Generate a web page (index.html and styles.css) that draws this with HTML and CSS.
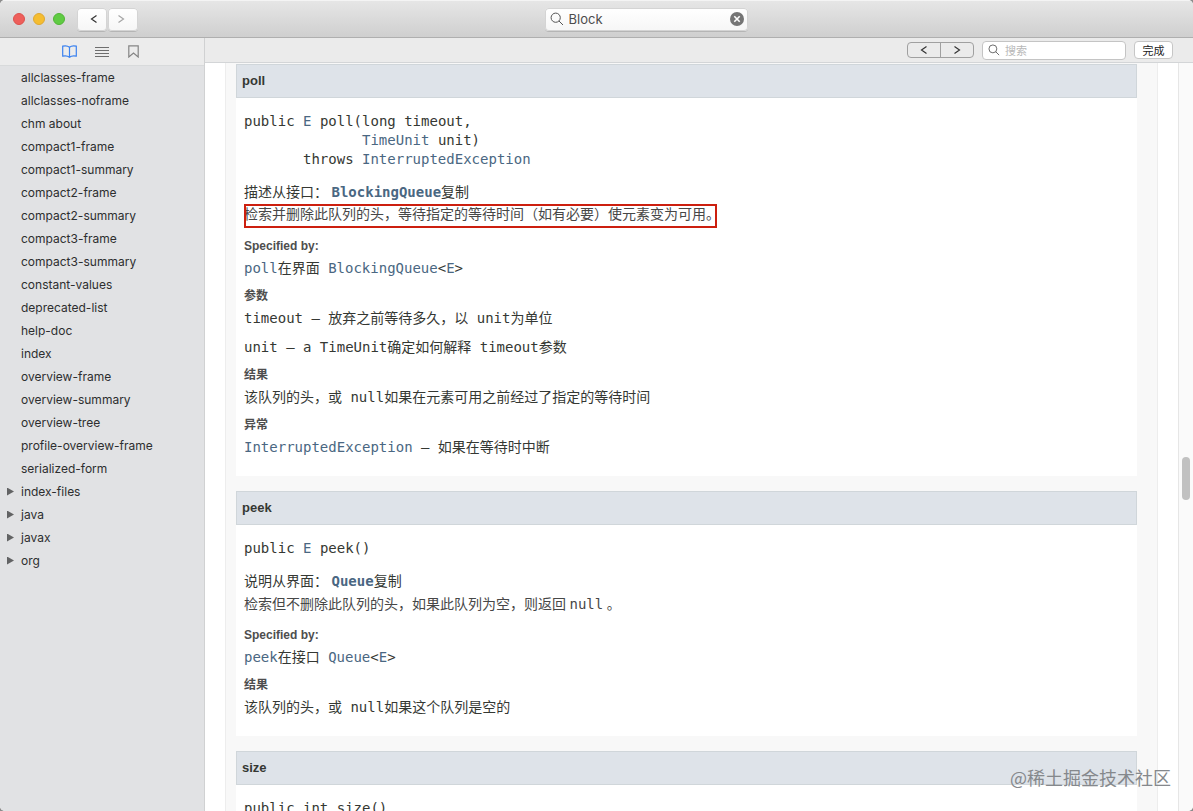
FILE: index.html
```html
<!DOCTYPE html>
<html lang="zh-CN">
<head>
<meta charset="utf-8">
<title>Block</title>
<link rel="stylesheet" href="styles.css">
</head>
<body>
<div class="window">
  <header class="titlebar">
    <div class="title-left">
      <div class="lights">
        <button class="light red" aria-label="关闭"></button>
        <button class="light yellow" aria-label="最小化"></button>
        <button class="light green" aria-label="缩放"></button>
      </div>
      <div class="history">
        <button class="back" aria-label="后退"><svg width="8" height="10" viewBox="0 0 8 10"><path d="M6.500 1.500 1.500 5l5 3.500"/></svg></button>
        <button class="forward" aria-label="前进"><svg width="8" height="10" viewBox="0 0 8 10"><path d="M1.500 1.500 6.500 5l-5 3.500"/></svg></button>
      </div>
    </div>
    <div class="search search-main">
      <svg width="14" height="14" viewBox="0 0 14 14"><circle cx="5.700" cy="5.700" r="4.600"/><path d="m9 9 4 4"/></svg>
      <input type="text" value="Block" aria-label="搜索文档">
      <button class="clear" aria-label="清除"><svg width="14" height="14" viewBox="0 0 14 14"><circle cx="7" cy="7" r="7"/><path d="m4.300 4.300 5.400 5.400m0-5.400L4.300 9.700"/></svg></button>
    </div>
  </header>

  <div class="body">
    <aside class="sidebar">
      <div class="tabs">
        <button class="tab active" aria-label="目录"><svg width="15" height="13" viewBox="0 0 15 13"><path d="M7.500 2.300C5.800.8 3.200.6.700 1.200v9.900c2.500-.6 5.100-.3 6.800 1.200 1.700-1.500 4.300-1.800 6.800-1.200V1.200C11.800.6 9.200.8 7.500 2.300zm0 0v10"/></svg></button>
        <button class="tab" aria-label="列表"><svg width="15" height="12" viewBox="0 0 15 12"><path d="M0 1.500h14M0 4.500h14M0 7.500h14M0 10.500h14"/></svg></button>
        <button class="tab mark" aria-label="书签"><svg width="11" height="13" viewBox="0 0 11 13"><path d="M.8.8h9.400v11.200L5.500 8 .8 12z"/></svg></button>
      </div>
      <ul class="tree">
        <li><a href="#">allclasses-frame</a></li>
        <li><a href="#">allclasses-noframe</a></li>
        <li><a href="#">chm about</a></li>
        <li><a href="#">compact1-frame</a></li>
        <li><a href="#">compact1-summary</a></li>
        <li><a href="#">compact2-frame</a></li>
        <li><a href="#">compact2-summary</a></li>
        <li><a href="#">compact3-frame</a></li>
        <li><a href="#">compact3-summary</a></li>
        <li><a href="#">constant-values</a></li>
        <li><a href="#">deprecated-list</a></li>
        <li><a href="#">help-doc</a></li>
        <li><a href="#">index</a></li>
        <li><a href="#">overview-frame</a></li>
        <li><a href="#">overview-summary</a></li>
        <li><a href="#">overview-tree</a></li>
        <li><a href="#">profile-overview-frame</a></li>
        <li><a href="#">serialized-form</a></li>
        <li class="folder"><button aria-label="展开 index-files"></button><a href="#">index-files</a></li>
        <li class="folder"><button aria-label="展开 java"></button><a href="#">java</a></li>
        <li class="folder"><button aria-label="展开 javax"></button><a href="#">javax</a></li>
        <li class="folder"><button aria-label="展开 org"></button><a href="#">org</a></li>
      </ul>
    </aside>

    <main class="main">
      <div class="findbar">
        <div class="stepper">
          <button aria-label="上一个"><svg width="8" height="10" viewBox="0 0 8 10"><path d="M6.500 1.500 1.500 5l5 3.500"/></svg></button>
          <button aria-label="下一个"><svg width="8" height="10" viewBox="0 0 8 10"><path d="M1.500 1.500 6.500 5l-5 3.500"/></svg></button>
        </div>
        <div class="search search-find">
          <svg width="12" height="12" viewBox="0 0 14 14"><circle cx="5.700" cy="5.700" r="4.600"/><path d="m9 9 4 4"/></svg>
          <input type="text" placeholder="搜索" aria-label="在页面中搜索">
        </div>
        <button class="done">完成</button>
      </div>

      <div class="viewport">
        <div class="page">
          <section class="method">
            <h4>poll</h4>
            <div class="detail">
<pre>public <a href="#">E</a> poll(long timeout,
              <a href="#">TimeUnit</a> unit)
       throws <a href="#">InterruptedException</a></pre>
              <p class="source">描述从接口： <a href="#">BlockingQueue</a>复制</p>
              <p class="text"><span class="marked">检索并删除此队列的头，等待指定的等待时间（如有必要）使元素变为可用。</span></p>
              <dl>
                <dt>Specified by:</dt>
                <dd><a href="#">poll</a>在界面 <a href="#">BlockingQueue</a>&lt;<a href="#">E</a>&gt;</dd>
                <dt>参数</dt>
                <dd>timeout – 放弃之前等待多久，以 unit为单位</dd>
                <dd>unit – a TimeUnit确定如何解释 timeout参数</dd>
                <dt>结果</dt>
                <dd>该队列的头，或 null如果在元素可用之前经过了指定的等待时间</dd>
                <dt>异常</dt>
                <dd><a href="#">InterruptedException</a> – 如果在等待时中断</dd>
              </dl>
            </div>
          </section>
          <section class="method">
            <h4>peek</h4>
            <div class="detail">
<pre>public <a href="#">E</a> peek()</pre>
              <p class="source">说明从界面： <a href="#">Queue</a>复制</p>
              <p class="text">检索但不删除此队列的头，如果此队列为空，则返回 <code>null</code> 。</p>
              <dl>
                <dt>Specified by:</dt>
                <dd><a href="#">peek</a>在接口 <a href="#">Queue</a>&lt;<a href="#">E</a>&gt;</dd>
                <dt>结果</dt>
                <dd>该队列的头，或 null如果这个队列是空的</dd>
              </dl>
            </div>
          </section>
          <section class="method">
            <h4>size</h4>
            <div class="detail">
<pre>public int size()</pre>
            </div>
          </section>
        </div>
        <div class="scrollbar"><div class="thumb"></div></div>
      </div>
    </main>
  </div>
  <div class="watermark">@稀土掘金技术社区</div>
</div>
</body>
</html>
```

FILE: styles.css
```css
* { box-sizing: border-box; }

body {
  margin: 0;
  background: #8c8c8c;
  color: #353833;
  font-family: "Liberation Sans", "Noto Sans CJK SC", sans-serif;
}

button {
  margin: 0;
  padding: 0;
  border: 0;
  background: none;
  display: flex;
  align-items: center;
  justify-content: center;
}

svg { fill: none; stroke: #555; stroke-width: 1; flex: none; }
a { color: #4a6782; text-decoration: none; }
ul, dl, dd, p, pre, h4 { margin: 0; padding: 0; }

.window {
  position: relative;
  height: 100vh;
  display: flex;
  flex-direction: column;
  overflow: hidden;
  border-radius: 5px;
  background: #fff;
}

/* Title bar */
.titlebar {
  flex: none;
  height: 38px;
  display: grid;
  grid-template-columns: 11fr 203px 9fr;
  align-items: center;
  border-top: 1px solid #f4f4f4;
  border-bottom: 1px solid #afafaf;
  background: linear-gradient(#e6e6e6, #cfcfcf);
}
.title-left { display: flex; align-items: center; gap: 12px; padding-left: 13px; }
.lights { display: flex; gap: 8px; }
.light { width: 12px; height: 12px; border-radius: 50%; border: 1px solid; }
.red { background: #ee5f5b; border-color: #dc514d; }
.yellow { background: #f5bd30; border-color: #dea832; }
.green { background: #60cb43; border-color: #50b536; }
.history { display: flex; gap: 1px; }
.history button {
  width: 30px;
  height: 23px;
  border-radius: 4px;
  background: linear-gradient(#fff, #f6f6f6);
  box-shadow: 0 0 0 1px #d4d4d4 inset, 0 1px 0 #b5b5b5;
}
.history svg { stroke: #333; stroke-width: 1.2; }
.history .back { padding-left: 3px; }
.history .forward { padding-right: 5px; }
.history .forward svg { stroke: #a5a5a5; }

.search { display: flex; align-items: center; gap: 5px; border-radius: 4px; }
.search input {
  flex: 1;
  min-width: 0;
  padding: 0;
  border: 0;
  outline: 0;
  background: none;
  color: #4c4c4c;
}
.search-main {
  height: 23px;
  padding: 0 4px 0 5px;
  background: linear-gradient(#fff, #f6f6f6);
  box-shadow: 0 0 0 1px #d4d4d4 inset, 0 1px 0 #b5b5b5;
}
.search-main input { font: 13px Inter, sans-serif; }
.clear circle { fill: #757575; stroke: none; }
.clear path { stroke: #fff; stroke-width: 1.6; }

.body { flex: 1; min-height: 0; display: flex; }

/* Sidebar */
.sidebar {
  flex: none;
  width: 205px;
  background: #e1e2e4;
  border-right: 1px solid #d0d1d2;
}
.tabs {
  height: 28px;
  display: flex;
  align-items: center;
  gap: 18px;
  padding-left: 62px;
  background: #ececec;
  border-bottom: 1px solid #d8dadb;
}
.tab svg { stroke: #6e6e6e; }
.active svg { stroke: #3b82f0; stroke-width: 1.2; }
.mark svg { stroke: #858585; stroke-width: 1.2; }
.tree { list-style: none; font: 12px/23px Inter, sans-serif; }
.tree li { padding-left: 21px; }
.tree a { color: #2d2e2f; }
.tree .folder { display: flex; align-items: center; gap: 7px; padding-left: 7px; }
.folder button {
  width: 7px;
  height: 8px;
  background: #626364;
  clip-path: polygon(0 0, 100% 50%, 0 100%);
}

/* Find bar */
.main { flex: 1; min-width: 0; display: flex; flex-direction: column; }
.findbar {
  flex: none;
  height: 25px;
  display: flex;
  align-items: center;
  justify-content: flex-end;
  gap: 8px;
  padding-right: 20px;
  background: #ebebeb;
  border-bottom: 1px solid #d3d5d7;
}
.stepper {
  display: flex;
  width: 67px;
  height: 16px;
  border: 1px solid #a0a0a0;
  border-radius: 4px;
}
.stepper button { flex: 1; }
.stepper button + button { border-left: 1px solid #a0a0a0; }
.stepper svg { stroke: #333; stroke-width: 1.2; }
.search-find {
  width: 144px;
  height: 19px;
  padding: 0 5px;
  background: #fff;
  border: 1px solid #c4c4c4;
}
.search-find input { font: 11px "Noto Sans CJK SC", sans-serif; }
.search-find input::placeholder { color: #b8b8b8; }
.done {
  width: 39px;
  height: 18px;
  border: 1px solid #c6c6c6;
  border-radius: 4px;
  background: #fff;
  color: #222;
  font: 11px "Noto Sans CJK SC", sans-serif;
}

/* Document */
.viewport { position: relative; flex: 1; min-height: 0; display: flex; overflow: hidden; }
.page {
  flex: 1;
  min-width: 0;
  margin: 0 20px;
  padding: 1px 20px 0 10px;
  background: #f8f8f8;
  border: solid #ededed;
  border-width: 0 1px;
}
.scrollbar { flex: none; width: 15px; background: #fafafa; border-left: 1px solid #e6e6e6; }
.thumb {
  position: absolute;
  right: 3px;
  top: 394px;
  width: 8px;
  height: 43px;
  border-radius: 4px;
  background: #c1c1c1;
}

.method { margin-bottom: 15px; background: #fff; }
.method h4 {
  padding: 0 5px;
  border: 1px solid #d0d6da;
  background: #dee3e9;
  font-size: 13px;
  line-height: 32px;
}
.detail { padding: 14px 8px 18px; }
pre, dd, code { font-family: "DejaVu Sans Mono", "Noto Sans CJK SC", monospace; font-size: 14px; }
pre { line-height: 19px; margin-bottom: 12px; }
.source, .text { font-family: "Liberation Serif", "Noto Sans CJK SC", serif; font-size: 14px; }
.source { line-height: 23px; }
.source a { font-family: "DejaVu Sans Mono", monospace; font-weight: bold; }
.text { line-height: 22px; padding-bottom: 1px; color: #474747; }
.marked { position: relative; display: inline-block; padding-bottom: 1px; vertical-align: top; }
.marked::after {
  content: "";
  position: absolute;
  inset: 0 3px -1px 0;
  border: 2px solid #cc1f0f;
}
dl { margin-top: 9px; }
dt { margin-bottom: 2px; font-size: 12px; font-weight: bold; line-height: 18px; color: #4e4e4e; }
dd { line-height: 22px; }
dd + dd { margin-top: 7px; }
dd + dt { margin-top: 8px; }

.watermark {
  position: absolute;
  right: 22px;
  bottom: 21px;
  color: #85888c;
  font: 18px/26px "Noto Sans CJK SC", sans-serif;
}
```
